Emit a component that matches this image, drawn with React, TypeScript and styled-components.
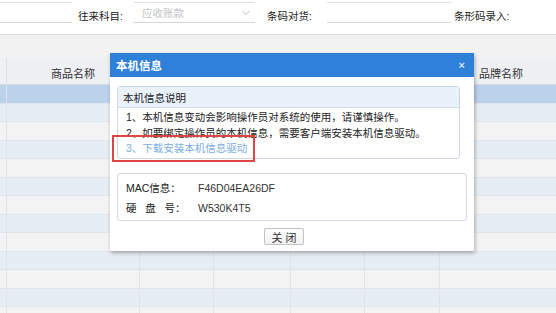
import * as React from "react";
import styled, { createGlobalStyle } from "styled-components";

const GlobalStyle = createGlobalStyle`
  html, body {
    margin: 0;
    padding: 0;
    background: #ffffff;
  }
  body {
    font-family: "Liberation Sans", "Noto Sans CJK SC", sans-serif;
    color: #333;
  }
`;

const COLUMNS = "7px 133px 74px 77px 74px 75px 1fr";
const ROW_COUNT = 13;

const Page = styled.div`
  position: relative;
  width: 556px;
  height: 313px;
  overflow: hidden;
  background: #fff;
`;

const FormBar = styled.div`
  height: 35px;
  display: flex;
  align-items: flex-start;
  border-bottom: 1px solid #dcdcdc;
  box-sizing: border-box;
`;

const Field = styled.div<{ $w: number; $ml?: number }>`
  width: ${(p) => p.$w}px;
  margin-left: ${(p) => p.$ml || 0}px;
  height: 21px;
  margin-top: 2px;
  border-top: 1px solid #e2e2e2;
  border-bottom: 1px solid #d6d6d6;
  box-sizing: border-box;
  display: flex;
  align-items: center;
  justify-content: space-between;
  padding: 0 6px 0 8px;
  font-size: 10.5px;
  color: #c4c4c4;
`;

const Arrow = styled.span`
  width: 5px;
  height: 5px;
  border-right: 1px solid #d4d4d4;
  border-bottom: 1px solid #d4d4d4;
  transform: rotate(45deg);
  margin-top: -3px;
`;

const Label = styled.span<{ $w: number; $ml?: number }>`
  width: ${(p) => p.$w}px;
  margin-left: ${(p) => p.$ml || 0}px;
  margin-top: 8px;
  font-size: 10.5px;
  color: #222;
  white-space: nowrap;
`;

const Band = styled.div`
  height: 23px;
  background: #f2f2f2;
`;

const HeaderRow = styled.div`
  display: grid;
  grid-template-columns: ${COLUMNS};
  height: 27px;
  background: #eef0f3;
  border-bottom: 1px solid #d7dde4;
  box-sizing: border-box;
`;

const HeadCell = styled.div`
  border-right: 1px solid #dde2e8;
  display: flex;
  align-items: center;
  justify-content: center;
  padding-top: 4px;
  font-size: 11px;
  color: #333;
  &:last-child {
    border-right: none;
    padding-left: 6px;
  }
`;

const Row = styled.div<{ $tone: "sel" | "blue" | "grey" }>`
  display: grid;
  grid-template-columns: ${COLUMNS};
  height: 18.5px;
  box-sizing: border-box;
  border-bottom: 1px solid #e1e5ea;
  background: ${(p) =>
    p.$tone === "sel" ? "#bcd2ea" : p.$tone === "blue" ? "#e7edf4" : "#f3f3f3"};
`;

const Cell = styled.div`
  border-right: 1px solid #dfe4ea;
  &:last-child {
    border-right: none;
  }
`;

const Dialog = styled.div`
  position: absolute;
  left: 110px;
  top: 53px;
  width: 364px;
  height: 198px;
  background: #fff;
  box-shadow: 1px 2px 4px rgba(0, 0, 0, 0.3);
  display: flex;
  flex-direction: column;
`;

const TitleBar = styled.div`
  height: 24px;
  background: #2f80d8;
  display: flex;
  align-items: center;
  justify-content: space-between;
  padding: 0 9px 0 6px;
  color: #fff;
  font-size: 11.5px;
  font-weight: bold;
`;

const Close = styled.span`
  font-size: 11px;
  font-weight: bold;
  color: #cfe0f4;
`;

const Body = styled.div`
  flex: 1;
  display: flex;
  flex-direction: column;
  padding: 9px 7px 0 7px;
`;

const GroupBox = styled.div<{ $right: number }>`
  border: 1px solid #cfd8e2;
  border-radius: 3px;
  margin-right: ${(p) => p.$right}px;
  box-sizing: border-box;
`;

const GroupTitle = styled.div`
  height: 20px;
  background: #e9f1fa;
  border-bottom: 1px solid #d5dee8;
  display: flex;
  align-items: center;
  padding-left: 5px;
  font-size: 10.5px;
  color: #222;
`;

const NoteList = styled.div`
  padding: 2px 0 1px 8px;
  display: flex;
  flex-direction: column;
`;

const Note = styled.div<{ $link?: boolean }>`
  font-size: 10.5px;
  line-height: 15.5px;
  color: ${(p) => (p.$link ? "#7aaedf" : "#222")};
`;

const InfoBox = styled(GroupBox)`
  margin-top: 14px;
  height: 48px;
  padding: 4px 0 0 8px;
  display: grid;
  grid-template-columns: 72px 1fr;
  grid-auto-rows: 20px;
  align-items: center;
`;

const InfoLabel = styled.span`
  font-size: 10.5px;
  color: #222;
  white-space: pre;
`;

const InfoValue = styled.span`
  font-size: 10.5px;
  color: #333;
`;

const Footer = styled.div`
  display: flex;
  justify-content: center;
  margin-top: 7px;
  padding-right: 16px;
`;

const Button = styled.button`
  width: 40px;
  height: 17px;
  padding: 0;
  border: 1px solid #c2c2c2;
  border-radius: 2px;
  background: linear-gradient(#ffffff, #f1f1f1);
  font-family: "Liberation Sans", "Noto Sans CJK SC", sans-serif;
  font-size: 11px;
  color: #333;
  letter-spacing: 3px;
  text-indent: 3px;
`;

const Highlight = styled.div`
  position: absolute;
  left: 112px;
  top: 135px;
  width: 143px;
  height: 27px;
  border: 2px solid #e04545;
  box-sizing: border-box;
`;

const App = () => {
  const rows = Array.from({ length: ROW_COUNT }, (_, i) =>
    i === 0 ? "sel" : i % 2 === 1 ? "blue" : "grey"
  ) as ("sel" | "blue" | "grey")[];

  return (
    <Page>
      <GlobalStyle />
      <FormBar>
        <Field $w={72} />
        <Label $w={56} $ml={6}>往来科目:</Label>
        <Field $w={121}>
          应收账款
          <Arrow />
        </Field>
        <Label $w={60} $ml={12}>条码对货:</Label>
        <Field $w={124} />
        <Label $w={90} $ml={3}>条形码录入:</Label>
      </FormBar>
      <Band />
      <HeaderRow>
        <HeadCell />
        <HeadCell>商品名称</HeadCell>
        <HeadCell />
        <HeadCell />
        <HeadCell />
        <HeadCell />
        <HeadCell>品牌名称</HeadCell>
      </HeaderRow>
      {rows.map((tone, i) => (
        <Row key={i} $tone={tone}>
          {Array.from({ length: 7 }, (_, c) => (
            <Cell key={c} />
          ))}
        </Row>
      ))}

      <Dialog>
        <TitleBar>
          <span>本机信息</span>
          <Close>×</Close>
        </TitleBar>
        <Body>
          <GroupBox $right={7}>
            <GroupTitle>本机信息说明</GroupTitle>
            <NoteList>
              <Note>1、本机信息变动会影响操作员对系统的使用，请谨慎操作。</Note>
              <Note>2、如要绑定操作员的本机信息，需要客户端安装本机信息驱动。</Note>
              <Note $link>3、下载安装本机信息驱动</Note>
            </NoteList>
          </GroupBox>
          <InfoBox $right={0}>
            <InfoLabel>MAC信息：</InfoLabel>
            <InfoValue>F46D04EA26DF</InfoValue>
            <InfoLabel>{"硬   盘   号："}</InfoLabel>
            <InfoValue>W530K4T5</InfoValue>
          </InfoBox>
          <Footer>
            <Button>关闭</Button>
          </Footer>
        </Body>
      </Dialog>
      <Highlight />
    </Page>
  );
};

export default App;
